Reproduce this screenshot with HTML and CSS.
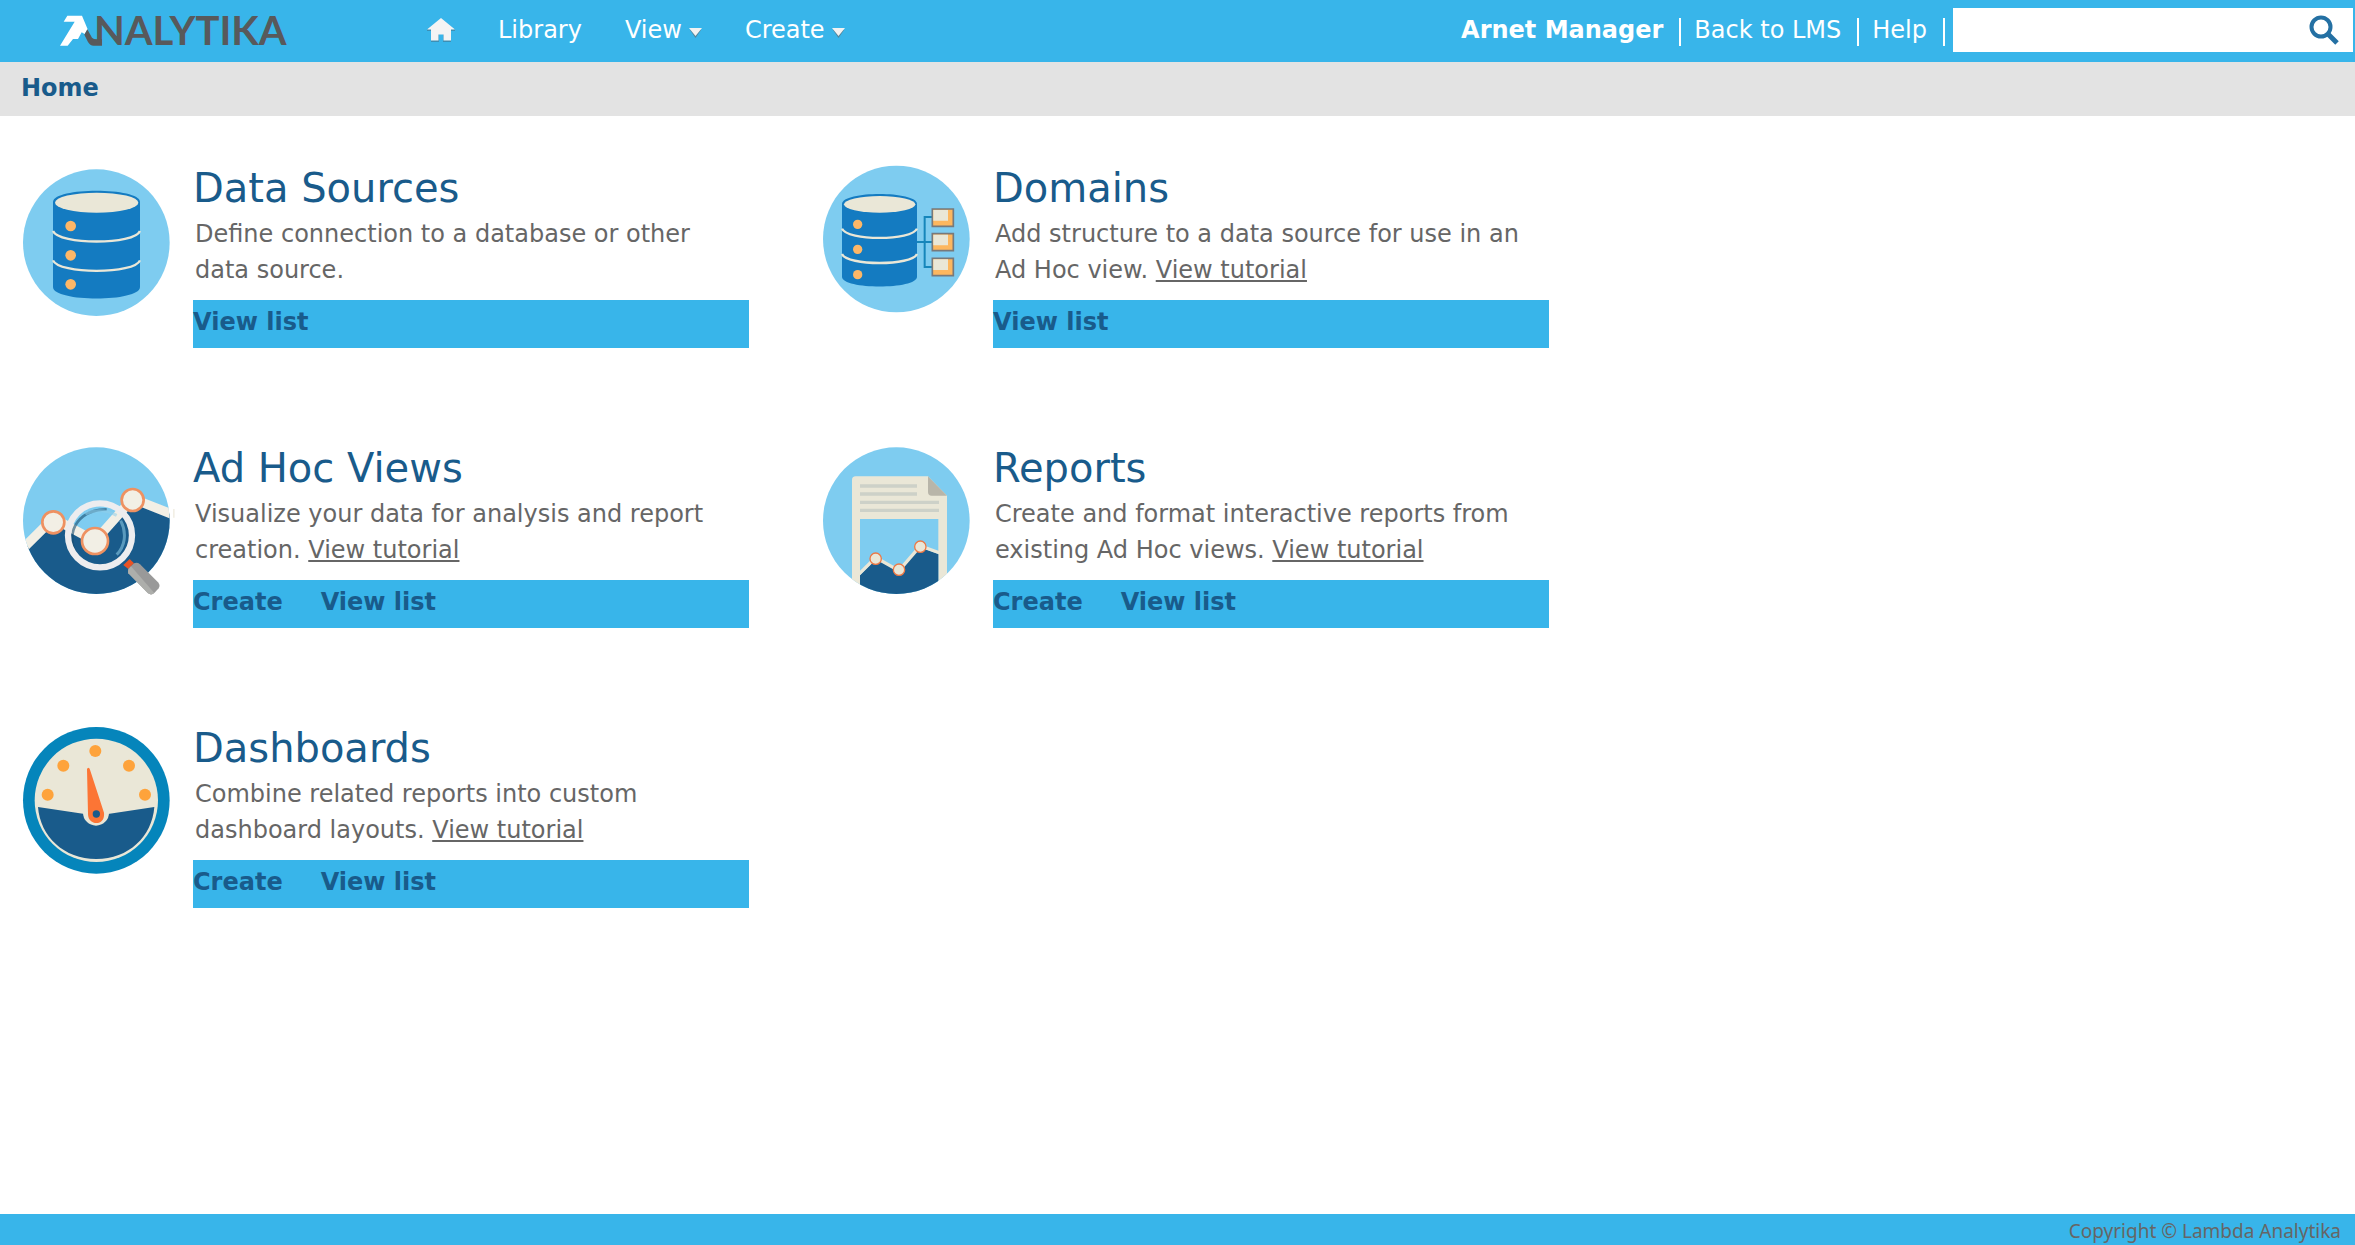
FILE: index.html
```html
<!DOCTYPE html>
<html lang="en">
<head>
<meta charset="utf-8">
<meta name="viewport" content="width=device-width, initial-scale=1">
<title>Analytika: Home</title>
<link rel="stylesheet" href="styles.css">
</head>
<body>
<header class="banner">
  <a class="logo" href="#" aria-label="Analytika">
    <svg class="logo-mark" viewBox="180 39 126 93" aria-hidden="true">
      <path fill="#fff" d="M202 41H246L263 82L254 96L245 91L234 111H219L203 131H180L224 59H191Z"/>
      <path fill="#58595b" d="M262 82L276 107Q280 112 292 112H306V131H281Q270 131 264 120L253 98Z"/>
    </svg>
    <span class="logo-word">NALYTIKA</span>
  </a>
  <nav class="menu">
    <a class="menu-home" href="#" aria-label="Home">
      <svg viewBox="0 0 28 25" aria-hidden="true">
        <path fill="#3f7f9c" d="M4 13H12V24H4ZM16 13H24V24H16ZM0 11H28V13H0Z" opacity=".7"/>
        <path fill="#f4f4f4" d="M14 0L28 11.500H24V22.500H16.500V16.500H11.500V22.500H4V11.500H0Z"/>
      </svg>
    </a>
    <a href="#">Library</a>
    <button type="button">View<svg class="caret" viewBox="0 0 13 10" aria-hidden="true"><path fill="#54859a" d="M1 2H12L6.500 10Z"/><path fill="#f2f2f2" d="M0 0H13L6.500 8Z"/></svg></button>
    <button type="button">Create<svg class="caret" viewBox="0 0 13 10" aria-hidden="true"><path fill="#54859a" d="M1 2H12L6.500 10Z"/><path fill="#f2f2f2" d="M0 0H13L6.500 8Z"/></svg></button>
  </nav>
  <div class="account">
    <span class="account-item account-name">Arnet Manager</span>
    <a class="account-item" href="#">Back to LMS</a>
    <a class="account-item" href="#">Help</a>
  </div>
  <form class="search" role="search">
    <input type="search" aria-label="Search">
    <button type="button" aria-label="Run search">
      <svg viewBox="0 0 30 30" aria-hidden="true">
        <circle cx="12" cy="12" r="9.500" fill="none" stroke="#2470a3" stroke-width="4"/>
        <path d="M19 19L28 28" stroke="#2470a3" stroke-width="5"/>
      </svg>
    </button>
  </form>
</header>
<div class="crumbs"><h1>Home</h1></div>
<main class="cards">
  <section class="card">
    <svg class="card-icon" viewBox="60 39 480 471" aria-hidden="true">
      <circle cx="289" cy="278" r="220" fill="#7eccf0"/>
      <path fill="#147bc1" d="M159 156C159 111 420 111 420 156V411C420 457 159 457 159 411Z"/>
      <ellipse cx="290" cy="158" rx="125" ry="30" fill="#eae7d7"/>
      <path d="M159 243C176 285 404 285 420 243M159 331C176 373 404 373 420 331" fill="none" stroke="#eae7d7" stroke-width="7"/>
      <g fill="#fdb767"><circle cx="212" cy="228" r="16"/><circle cx="212" cy="316" r="16"/><circle cx="212" cy="403" r="16"/></g>
    </svg>
    <div class="card-body">
      <h2>Data Sources</h2>
      <p>Define connection to a database or other data source.</p>
      <div class="actions"><a href="#">View list</a></div>
    </div>
  </section>
  <section class="card">
    <svg class="card-icon" viewBox="60 39 480 471" aria-hidden="true">
      <circle cx="289" cy="267" r="220" fill="#7eccf0"/>
      <path fill="#147bc1" d="M126 162C126 122 351 122 351 162V380C351 419 126 419 126 380Z"/>
      <ellipse cx="239" cy="163" rx="107" ry="25" fill="#eae7d7"/>
      <path d="M126 236C141 273 336 273 351 236M126 312C141 348 336 348 351 312" fill="none" stroke="#eae7d7" stroke-width="7"/>
      <g fill="#fdb767"><circle cx="173" cy="223" r="14"/><circle cx="173" cy="298" r="14"/><circle cx="173" cy="374" r="14"/></g>
      <path d="M351 276H396M396 201H374V351H396" fill="none" stroke="#1686bb" stroke-width="6"/>
      <g fill="#fdb75f" stroke="#77797b" stroke-width="5"><path d="M397 177H460V229H397ZM397 251H460V302H397ZM397 325H460V377H397Z"/></g>
      <path fill="#eae7d7" d="M400 180H444V212H400ZM400 254H444V286H400ZM400 328H444V360H400Z"/>
    </svg>
    <div class="card-body">
      <h2>Domains</h2>
      <p>Add structure to a data source for use in an Ad Hoc view. <a href="#">View tutorial</a></p>
      <div class="actions"><a href="#">View list</a></div>
    </div>
  </section>
  <section class="card">
    <svg class="card-icon" viewBox="60 39 480 471" aria-hidden="true">
      <defs>
        <clipPath id="views-disc"><circle cx="289" cy="272" r="220"/></clipPath>
        <clipPath id="lens"><circle cx="300" cy="316" r="87"/></clipPath>
      </defs>
      <g clip-path="url(#views-disc)">
        <path fill="#7eccf0" d="M60 39H540V510H60Z"/>
        <path fill="#195b8b" d="M60 370L160 277L285 333L398 210L540 262V510H60Z"/>
        <path fill="none" stroke="#f2efe5" stroke-width="28" d="M60 364L160 265L285 333L398 206L540 262"/>
      </g>
      <path fill="#f2efe5" d="M519 237H524V263H519Z"/>
      <g clip-path="url(#lens)" fill="none">
        <path d="M227 372C194 290 248 238 320 238" stroke="#174d70" stroke-width="8" opacity=".6"/>
        <path d="M256 252C290 236 320 240 350 256M362 272C382 310 374 350 350 374" stroke="#90cee9" stroke-width="9" opacity=".55"/>
      </g>
      <g fill="#f2efe5" stroke="#ee9161" stroke-width="8"><circle cx="160" cy="277" r="33"/><circle cx="398" cy="210" r="33"/><circle cx="285" cy="333" r="39"/></g>
      <circle cx="300" cy="316" r="96" fill="none" stroke="#ededef" stroke-width="19"/>
      <path fill="#e95324" d="M370 405L389 387L402 400L385 417Z"/>
      <path fill="#999" d="M384 427V417L402 400Q412 396 420 403L474 457Q482 466 476 475L463 489Q454 497 444 490L385 430Z"/>
      <path fill="#adaeab" d="M393 409L463 489Q454 497 444 490L385 430Q381 422 393 409Z"/>
    </svg>
    <div class="card-body">
      <h2>Ad Hoc Views</h2>
      <p>Visualize your data for analysis and report creation. <a href="#">View tutorial</a></p>
      <div class="actions"><a href="#">Create</a><a href="#">View list</a></div>
    </div>
  </section>
  <section class="card">
    <svg class="card-icon" viewBox="60 39 480 471" aria-hidden="true">
      <defs><clipPath id="report-disc"><circle cx="289" cy="272" r="220"/></clipPath></defs>
      <g clip-path="url(#report-disc)">
        <path fill="#7eccf0" d="M60 39H540V510H60Z"/>
        <path fill="#eae7d7" d="M156 150Q156 139 167 139H384L441 197V510H156Z"/>
        <path fill="#b8b5a9" d="M384 139L441 197H395Q384 197 384 186Z"/>
        <path fill="#cdd1c8" d="M180 163H351V173H180ZM180 187H351V197H180ZM180 212H417V222H180ZM180 236H417V246H180Z"/>
        <path fill="#7eccf0" d="M180 267H415V510H180Z"/>
        <path fill="#195b8b" d="M180 436L227 388L297 423L361 352L415 372V510H180Z"/>
        <path fill="none" stroke="#eae7d7" stroke-width="10" d="M176 433L227 383L297 422L361 348L420 369"/>
        <g fill="#eae7d7" stroke="#ed7844" stroke-width="4"><circle cx="227" cy="386" r="17"/><circle cx="297" cy="419" r="17"/><circle cx="361" cy="350" r="17"/></g>
      </g>
    </svg>
    <div class="card-body">
      <h2>Reports</h2>
      <p>Create and format interactive reports from existing Ad Hoc views. <a href="#">View tutorial</a></p>
      <div class="actions"><a href="#">Create</a><a href="#">View list</a></div>
    </div>
  </section>
  <section class="card">
    <svg class="card-icon" viewBox="60 39 480 471" aria-hidden="true">
      <circle cx="289" cy="271" r="220" fill="#0585bb"/>
      <circle cx="289" cy="271" r="185" fill="#eae7d7"/>
      <path fill="#195b8b" d="M114 291L289 317L463 291C456 380 386 447 289 447S121 380 114 291Z"/>
      <circle cx="288" cy="308" r="39" fill="#eae7d7"/>
      <g fill="#fea33b"><circle cx="286" cy="123" r="18"/><circle cx="190" cy="167" r="18"/><circle cx="387" cy="167" r="18"/><circle cx="143" cy="254" r="18"/><circle cx="435" cy="254" r="18"/></g>
      <path fill="#fc7535" d="M261 178Q261 173 266 173Q269 174 270 179L312 308C317 350 264 348 264 312Z"/>
      <circle cx="289" cy="312" r="11" fill="#195b8b"/>
    </svg>
    <div class="card-body">
      <h2>Dashboards</h2>
      <p>Combine related reports into custom dashboard layouts. <a href="#">View tutorial</a></p>
      <div class="actions"><a href="#">Create</a><a href="#">View list</a></div>
    </div>
  </section>
</main>
<footer class="footer">Copyright © Lambda Analytika</footer>
</body>
</html>
```
FILE: styles.css
```css
* { box-sizing: border-box; }

body {
  display: flex;
  flex-direction: column;
  min-height: 100vh;
  margin: 0;
  background: #fff;
  color: #666;
  font: 24px/36px Verdana, "DejaVu Sans", sans-serif;
}

a { color: inherit; }

button {
  padding: 0;
  border: 0;
  background: none;
  color: inherit;
  font: inherit;
}

h1, h2, p { margin: 0; }

.banner {
  display: flex;
  align-items: center;
  min-height: 62px;
  padding: 0 2px 2px 60px;
  background: #38b5ea;
  color: #fff;
}

.banner a { text-decoration: none; }

.logo {
  display: flex;
  align-items: center;
  width: 367px;
  height: 40px;
}

.logo-mark {
  width: 42px;
  height: 31px;
  margin-right: -8px;
}

.logo-word {
  color: #58595b;
  font: 700 40px/40px Lato, sans-serif;
}

.menu {
  display: flex;
  align-items: center;
  gap: 43px;
}

.menu-home svg {
  display: block;
  width: 28px;
  height: 25px;
}

.caret {
  width: 13px;
  height: 10px;
  margin-left: 7px;
}

.account {
  display: flex;
  margin-left: auto;
  padding-top: 4px;
  line-height: 24px;
}

.account-item {
  padding: 0 16px 4px 13px;
  border-right: 2px solid #fff;
}

.account-name { font-weight: 700; }

.search {
  display: flex;
  align-items: center;
  width: 400px;
  height: 44px;
  margin-left: 8px;
  padding-right: 14px;
  background: #fff;
}

.search input {
  flex: 1;
  min-width: 0;
  height: 44px;
  padding: 0 8px;
  border: 0;
  outline: 0;
  background: none;
  font: inherit;
}

.search svg {
  display: block;
  width: 30px;
  height: 30px;
}

.crumbs {
  height: 54px;
  padding: 8px 21px;
  background: #e3e3e3;
  color: #195b8b;
}

.crumbs h1 {
  font-size: 24px;
  font-weight: 700;
}

.cards {
  display: grid;
  flex: 1;
  grid-template-columns: repeat(auto-fill, minmax(min(100%, 800px), 800px));
  align-content: start;
  row-gap: 95px;
  padding: 47px 0;
}

.card {
  display: flex;
  gap: 13px;
  padding: 0 51px 0 20px;
}

.card-icon {
  flex: none;
  width: 160px;
  height: 157px;
}

.card-body { flex: 1; }

.card h2 {
  color: #195b8b;
  font-size: 40px;
  font-weight: 400;
  line-height: 50px;
}

.card p { padding: 3px 20px 12px 2px; }

.actions {
  display: flex;
  gap: 38px;
  height: 48px;
  padding-top: 4px;
  background: #38b5ea;
  color: #195b8b;
  font-weight: 700;
}

.actions a { text-decoration: none; }

.footer {
  padding: 3px 14px 0;
  background: #38b5ea;
  font: 19px/28px "Noto Sans", sans-serif;
  text-align: right;
}
```
